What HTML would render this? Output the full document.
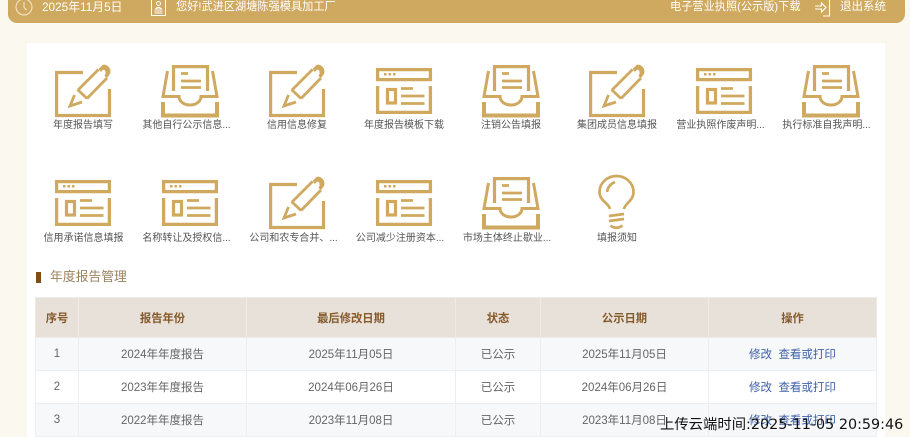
<!DOCTYPE html>
<html lang="zh">
<head>
<meta charset="utf-8">
<style>
html,body{margin:0;padding:0;width:910px;height:437px;overflow:hidden;background:#fbf8f0;}
body{position:relative;font-family:"Liberation Sans","Noto Sans CJK SC",sans-serif;}
.hd{position:absolute;left:8px;top:-10px;width:897px;height:33px;background:#cfa95f;border-radius:9px;}
.ht{position:absolute;color:#fff;font-size:11.2px;line-height:14px;top:0;white-space:nowrap;}
.panel{position:absolute;left:27px;top:43px;width:858px;height:394px;background:#fff;}
.ic{position:absolute;overflow:visible;}
.lb{position:absolute;width:107px;text-align:center;font-size:10px;line-height:14px;color:#555;white-space:nowrap;}
.mark{position:absolute;left:36px;top:272px;width:5px;height:11px;background:#7e4e14;}
.title{position:absolute;left:50px;top:268px;font-size:12.8px;line-height:17px;color:#9b8260;}
table{position:absolute;left:35px;top:297px;width:841px;border-collapse:collapse;table-layout:fixed;font-size:11.5px;color:#666;}
td,th{border:1px solid #eceef0;text-align:center;padding:0;}
th{height:39px;background:#e8e1da;color:#85592a;font-size:11.3px;border-color:#efeae5;}
td{height:32px;}
tr.s td{background:#f6f8fa;}
tr.w td{background:#fff;}
a{color:#4262aa;text-decoration:none;}
.stamp{position:absolute;left:660px;top:416px;font-family:"DejaVu Sans","WenQuanYi Zen Hei","Noto Sans CJK SC",sans-serif;font-size:14.35px;line-height:18px;color:#111;white-space:nowrap;}
</style>
</head>
<body>
<svg width="0" height="0" style="position:absolute">
<defs>
<symbol id="pen" viewBox="0 0 57 55" overflow="visible">
<g fill="none" stroke="#cfa95f" stroke-width="3.200">
<path d="M28 8.500H1.600V51.500H54.500V25"/>
<path stroke-width="2.800" d="M23 26L43.500 5.500M32 34.500L52 14M22.500 25.500L32 34.500"/>
<path stroke-width="2.800" d="M19.500 31L15 42L27 38"/>
</g>
<path d="M43.500 5L47.500 1Q49.500 0 52 1.500Q55.500 4 55.500 7.500Q55.500 10 52 14L49.500 12Q51.500 8.500 50 6.500Q48.500 4.500 46 8Z" fill="#cfa95f"/>
</symbol>
<symbol id="tray" viewBox="0 0 58 55" overflow="visible">
<g fill="none" stroke="#cfa95f">
<path stroke-width="3.200" d="M12.500 26V1.600H46.500V26"/>
<path stroke-width="2.800" d="M20 8.500H27M20 16H40M20 22.500H40"/>
<path stroke-width="3" d="M6.500 6L2 31.500H18A11 8.500 0 0 0 40 31.500H56L51.500 6"/>
<path stroke-width="4" d="M2 37V50.500H56V37"/>
</g>
</symbol>
<symbol id="win" viewBox="0 0 56 47" overflow="visible">
<g fill="none" stroke="#cfa95f">
<rect x="1.600" y="1.600" width="52.800" height="10" stroke-width="3.300"/>
<path stroke-width="3.300" d="M1.600 18V44.400H54.400V18"/>
<rect x="11.500" y="21.500" width="8" height="13.500" stroke-width="3.200"/>
<path stroke-width="2.800" d="M25 20.500H37M25 28H48.500M25 35.500H48.500"/>
</g>
<path fill="#cfa95f" d="M8 5h2.500v2.500H8zM12.500 5H15v2.500h-2.500zM17 5h2.500v2.500H17z"/>
</symbol>
<symbol id="bulb" viewBox="0 0 37 56" overflow="visible">
<g fill="none" stroke="#cfa95f" stroke-width="2.700">
<path d="M12 34C11 28 1.500 26 1.500 17A17 16 0 0 1 35.500 17C35.500 26 27 28 26 34"/>
<path d="M9 17Q10 10 17 7"/>
<path d="M11 41L26 39M11 46L26 44M12.500 50.500Q18 55 24.500 50.500"/>
</g>
</symbol>
</defs>
</svg>

<div class="hd"></div>
<svg class="ic" style="left:15px;top:-3px" width="18" height="19" viewBox="0 0 18 19"><g fill="none" stroke="#f3e7cf" stroke-width="1"><circle cx="9" cy="10" r="8"/><path d="M9 5V10.500L11.500 13"/></g></svg>
<div class="ht" style="left:42px;font-size:11.800px;">2025年11月5日</div>
<svg class="ic" style="left:150px;top:0" width="17" height="16" viewBox="0 0 17 16"><g fill="none" stroke="#fff" stroke-width="1"><path d="M1.500 0V15.500H15.500V0"/><circle cx="8.500" cy="3.500" r="2"/><path d="M5.500 9Q8.500 5.500 11.500 9ZM4.500 11H12.500M4.500 13H12.500"/></g></svg>
<div class="ht" style="left:176px;">您好!武进区湖塘陈强模具加工厂</div>
<div class="ht" style="left:670px;">电子营业执照(公示版)下载</div>
<svg class="ic" style="left:814px;top:0" width="17" height="17" viewBox="0 0 17 17"><g fill="none" stroke="#fff" stroke-width="1.100"><path d="M1 6H7.500V3L12 7.500L7.500 12V9H1"/><path d="M15.500 0V16H9"/></g></svg>
<div class="ht" style="left:840px;font-size:11.500px;">退出系统</div>

<div class="panel"></div>

<svg class="ic" style="left:55px;top:64px" width="57" height="55"><use href="#pen"/></svg>
<svg class="ic" style="left:161px;top:65px" width="58" height="55"><use href="#tray"/></svg>
<svg class="ic" style="left:269px;top:64px" width="57" height="55"><use href="#pen"/></svg>
<svg class="ic" style="left:376px;top:68px" width="56" height="47"><use href="#win"/></svg>
<svg class="ic" style="left:482px;top:65px" width="58" height="55"><use href="#tray"/></svg>
<svg class="ic" style="left:589px;top:64px" width="57" height="55"><use href="#pen"/></svg>
<svg class="ic" style="left:696px;top:68px" width="56" height="47"><use href="#win"/></svg>
<svg class="ic" style="left:802px;top:65px" width="58" height="55"><use href="#tray"/></svg>

<svg class="ic" style="left:55px;top:180px" width="56" height="47"><use href="#win"/></svg>
<svg class="ic" style="left:162px;top:180px" width="56" height="47"><use href="#win"/></svg>
<svg class="ic" style="left:269px;top:176px" width="57" height="55"><use href="#pen"/></svg>
<svg class="ic" style="left:376px;top:180px" width="56" height="47"><use href="#win"/></svg>
<svg class="ic" style="left:482px;top:177px" width="58" height="55"><use href="#tray"/></svg>
<svg class="ic" style="left:598px;top:175px" width="37" height="56"><use href="#bulb"/></svg>

<div class="lb" style="left:29.500px;top:119px">年度报告填写</div>
<div class="lb" style="left:133px;top:119px">其他自行公示信息...</div>
<div class="lb" style="left:243.500px;top:119px">信用信息修复</div>
<div class="lb" style="left:350.500px;top:119px">年度报告模板下载</div>
<div class="lb" style="left:457.500px;top:119px">注销公告填报</div>
<div class="lb" style="left:563.500px;top:119px">集团成员信息填报</div>
<div class="lb" style="left:667px;top:119px">营业执照作废声明...</div>
<div class="lb" style="left:773px;top:119px">执行标准自我声明...</div>

<div class="lb" style="left:30px;top:232px">信用承诺信息填报</div>
<div class="lb" style="left:133px;top:232px">名称转让及授权信...</div>
<div class="lb" style="left:240px;top:232px">公司和农专合并、...</div>
<div class="lb" style="left:346.500px;top:232px">公司减少注册资本...</div>
<div class="lb" style="left:453.500px;top:232px">市场主体终止歇业...</div>
<div class="lb" style="left:563.500px;top:232px">填报须知</div>

<div class="mark"></div>
<div class="title">年度报告管理</div>

<table>
<colgroup><col style="width:43px"><col style="width:168px"><col style="width:209px"><col style="width:85px"><col style="width:168px"><col style="width:168px"></colgroup>
<tr><th>序号</th><th>报告年份</th><th>最后修改日期</th><th>状态</th><th>公示日期</th><th>操作</th></tr>
<tr class="s"><td>1</td><td>2024年年度报告</td><td>2025年11月05日</td><td>已公示</td><td>2025年11月05日</td><td><a href="#">修改</a>&nbsp;&nbsp;<a href="#">查看或打印</a></td></tr>
<tr class="w"><td>2</td><td>2023年年度报告</td><td>2024年06月26日</td><td>已公示</td><td>2024年06月26日</td><td><a href="#">修改</a>&nbsp;&nbsp;<a href="#">查看或打印</a></td></tr>
<tr class="s"><td>3</td><td>2022年年度报告</td><td>2023年11月08日</td><td>已公示</td><td>2023年11月08日</td><td><a href="#">修改</a>&nbsp;&nbsp;<a href="#">查看或打印</a></td></tr>
</table>

<div class="stamp">上传云端时间:2025-11-05 20:59:46</div>
</body>
</html>
